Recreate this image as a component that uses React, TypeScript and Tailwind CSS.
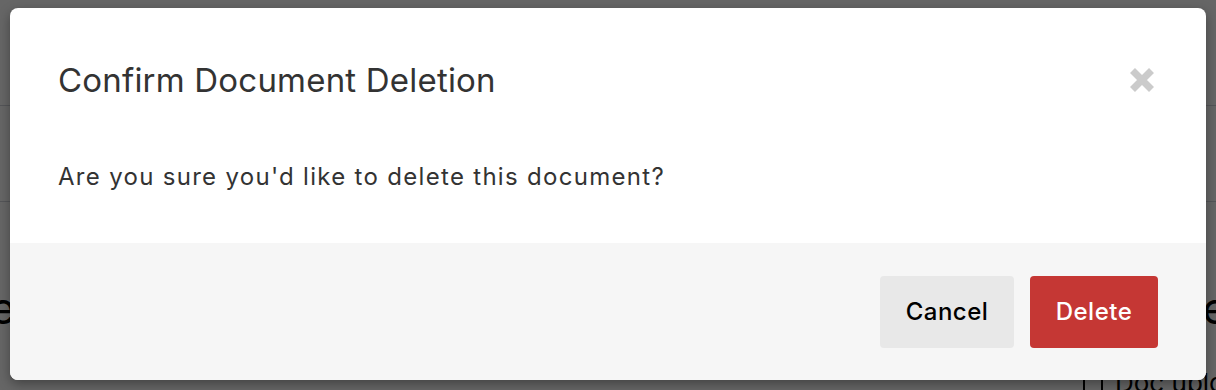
import React from 'react';

function CloseIcon() {
  return (
    <svg width="28" height="28" viewBox="0 0 28 28" aria-hidden="true">
      <path d="M4.5 4.5 L23.5 23.5 M23.5 4.5 L4.5 23.5" stroke="#cbcbcb" strokeWidth="7" strokeLinecap="butt" />
    </svg>
  );
}

export default function App() {
  return (
    <div
      className="relative w-[1216px] h-[390px] overflow-hidden bg-white text-black"
      style={{ fontFamily: 'Inter, "Noto Sans", sans-serif' }}
    >
      {/* page behind the dialog */}
      <div className="h-[106px] border-b border-gray-300" />
      <div className="h-[96px] border-b border-gray-300" />
      <div className="flex justify-between items-start pt-[84px]">
        <span className="-ml-[10px] text-[44px] leading-none">e</span>
        <span className="-mr-[12px] text-[44px] leading-none">e</span>
      </div>
      <div className="flex items-center gap-3 pl-[1083px] pt-[40px] whitespace-nowrap">
        <span className="shrink-0 w-[20px] h-[20px] border-2 border-black rounded-[3px]" />
        <span className="text-[26px] leading-none">Doc uploaded</span>
      </div>

      {/* overlay */}
      <div className="absolute inset-0 bg-black/60" />

      {/* dialog */}
      <div className="absolute left-[10px] top-[8px] w-[1196px] h-[372px] bg-white rounded-[8px] shadow-[0_4px_12px_rgba(0,0,0,0.35)] overflow-hidden flex flex-col">
        <div className="flex items-center justify-between pl-12 pr-[50px] pt-[52px]">
          <h2 className="text-[33px] leading-[40px] tracking-[0.2px] text-[#333333] font-normal">
            Confirm Document Deletion
          </h2>
          <button className="w-[28px] h-[28px] flex items-center justify-center">
            <CloseIcon />
          </button>
        </div>
        <div className="px-12 pt-[61px] pb-[50px]">
          <p className="text-[24px] leading-[32px] tracking-[1.3px] text-[#333333]">
            Are you sure you'd like to delete this document?
          </p>
        </div>
        <div className="flex-1 bg-[#f6f6f6] flex justify-end items-center gap-4 px-12">
          <button className="h-[72px] w-[134px] rounded-[4px] bg-[#e8e8e8] text-[24px] font-medium tracking-[0.5px] text-black">
            Cancel
          </button>
          <button className="h-[72px] w-[128px] rounded-[4px] bg-[#c53734] text-[24px] font-medium tracking-[0.5px] text-white">
            Delete
          </button>
        </div>
      </div>
    </div>
  );
}
